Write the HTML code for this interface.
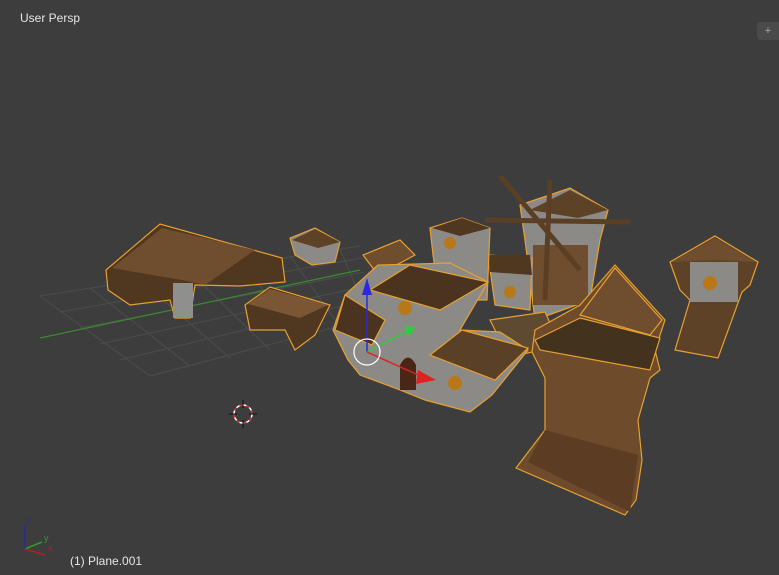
<!DOCTYPE html>
<html><head><style>
html,body{margin:0;padding:0;background:#3d3d3d;width:779px;height:575px;overflow:hidden;font-family:"Liberation Sans",sans-serif}
.t{position:absolute;color:#e6e6e6;font-size:12px}
</style></head><body>
<div class="t" style="left:20px;top:11px">User Persp</div>
<div class="t" style="left:70px;top:554px">(1) Plane.001</div>
<div style="position:absolute;left:757px;top:22px;width:22px;height:18px;background:#4a4a4a;border-radius:3px 0 0 3px;color:#aaa;font-size:11px;text-align:center;line-height:18px">+</div>
<svg width="779" height="575" style="position:absolute;left:0;top:0">
<g stroke="#4d4d4d" stroke-width="1" fill="none">
<path d="M40 296 L360 246 M60 312 L362 258 M80 328 L364 272 M100 344 L366 286 M120 360 L368 300 M150 376 L370 318"/>
<path d="M40 296 L150 376 M90 288 L190 366 M140 280 L230 358 M190 272 L270 350 M240 264 L310 342 M290 256 L345 334 M340 249 L370 320"/>
</g>
<path d="M40 338 L360 270" stroke="#3b8a2e" stroke-width="1.2"/>
<g stroke="#e8a030" stroke-width="1.2">
<path d="M106 270 L160 224 L282 258 L285 282 L240 286 L195 285 L190 318 L175 318 L170 300 L130 305 L108 290 Z" fill="#4f3720"/>
<path d="M112 268 L162 228 L255 250 L205 285 L182 280 Z" fill="#6e4e2e" stroke="none"/>
<rect x="173" y="283" width="20" height="35" fill="#8f8f8d" stroke="none"/>
<path d="M290 238 L315 228 L340 242 L335 262 L312 265 L295 255 Z" fill="#8c8a86"/>
<path d="M292 240 L315 229 L340 242 L318 248 Z" fill="#5e4228" stroke="none"/>
<path d="M245 305 L270 287 L330 305 L315 335 L295 350 L285 330 L250 330 Z" fill="#4f3720"/>
<path d="M248 304 L270 289 L328 305 L300 318 Z" fill="#7a5634" stroke="none"/>
</g>
<g stroke="#e8a030" stroke-width="1.2">
<path d="M670 262 L715 236 L758 262 L750 285 L742 292 L718 358 L675 350 L690 300 L680 290 Z" fill="#5e4228"/>
<path d="M672 262 L715 238 L756 262 L716 260 Z" fill="#6e4e2e" stroke="none"/>
<rect x="690" y="262" width="48" height="40" fill="#8c8a86" stroke="none"/>
<circle cx="710" cy="283" r="7" fill="#b87818" stroke="none"/>
</g>
<g stroke="#e8a030" stroke-width="1.2">
<path d="M520 205 L570 188 L608 210 L600 240 L590 300 L535 320 L525 240 Z" fill="#8c8a86"/>
<path d="M530 210 L570 190 L608 210 L578 218 Z" fill="#5e4228" stroke="none"/>
<rect x="533" y="245" width="55" height="60" fill="#6e4e2e" stroke="none"/>
<path d="M500 176 L580 270 M485 220 L630 222 M550 180 L545 300" stroke="#5a3f25" stroke-width="5" fill="none"/>
<path d="M488 255 L532 258 L530 310 L495 305 Z" fill="#8c8a86"/>
<path d="M488 255 L530 255 L532 275 L490 272 Z" fill="#4f3720" stroke="none"/>
<circle cx="510" cy="292" r="6" fill="#b87818" stroke="none"/>
</g>
<g stroke="#e8a030" stroke-width="1.2">
<path d="M430 228 L462 218 L490 228 L487 300 L440 300 L433 255 Z" fill="#8c8a86"/>
<path d="M432 228 L462 218 L490 228 L460 236 Z" fill="#4f3720" stroke="none"/>
<circle cx="450" cy="243" r="6" fill="#b87818" stroke="none"/>
<path d="M363 255 L400 240 L415 255 L378 275 Z" fill="#6e4e2e"/>
</g>
<g stroke="#e8a030" stroke-width="1.2">
<path d="M490 320 L545 312 L560 345 L520 355 L500 340 Z" fill="#5e4a30"/>
</g>
<g stroke="#e8a030" stroke-width="1.2">
<path d="M345 295 L378 265 L450 263 L488 282 L460 330 L500 332 L528 350 L492 395 L470 412 L425 400 L400 390 L360 375 L348 360 L333 330 Z" fill="#8c8a86"/>
<path d="M370 290 L410 265 L488 282 L440 310 Z" fill="#4a3420"/>
<path d="M335 330 L345 295 L385 320 L372 345 Z" fill="#4a3420"/>
<path d="M430 355 L462 330 L528 348 L495 380 Z" fill="#5a4026"/>
<circle cx="405" cy="308" r="7" fill="#b87818" stroke="none"/>
<circle cx="455" cy="383" r="7" fill="#b87818" stroke="none"/>
<path d="M400 365 Q408 350 416 365 L416 390 L400 390 Z" fill="#4a2616" stroke="none"/>
</g>
<g stroke="#e8a030" stroke-width="1.2">
<path d="M535 330 L580 305 L615 265 L665 320 L655 350 L660 370 L650 378 L638 420 L642 460 L636 500 L625 515 L516 468 L545 430 L545 378 L532 352 Z" fill="#6e4b2b"/>
<path d="M535 340 L580 318 L660 338 L650 370 L540 350 Z" fill="#43321e"/>
<path d="M580 315 L615 268 L662 320 L650 335 Z" fill="#6e4e2e"/>
<path d="M528 462 L545 430 L638 455 L630 512 Z" fill="#5c3c22" stroke="none"/>
</g>
<path d="M367 352 L367 285" stroke="#2a2adc" stroke-width="1.5"/>
<path d="M362 295 L367 278 L372 295 Z" fill="#2a2adc"/>
<path d="M367 352 L410 330" stroke="#2ecc40" stroke-width="1.5"/>
<path d="M404 326 L416 327 L408 337 Z" fill="#2ecc40"/>
<path d="M367 352 L425 378" stroke="#dd2222" stroke-width="1.5"/>
<path d="M418 370 L436 380 L416 384 Z" fill="#dd2222"/>
<circle cx="367" cy="352" r="13" fill="none" stroke="#fff" stroke-width="1.2"/>
<circle cx="243" cy="414" r="9" fill="none" stroke="#fff" stroke-width="1.5" stroke-dasharray="4 3"/>
<circle cx="243" cy="414" r="9" fill="none" stroke="#d33" stroke-width="1.5" stroke-dasharray="3 4" stroke-dashoffset="3.5"/>
<path d="M243 400 V408 M243 420 V428 M229 414 H237 M249 414 H257" stroke="#111" stroke-width="1"/>
<path d="M25 549 V525" stroke="#2a2aa0" stroke-width="1.5"/>
<path d="M25 549 L42 542" stroke="#2e9a2e" stroke-width="1.5"/>
<path d="M25 549 L45 555" stroke="#b02020" stroke-width="1.5"/>
<text x="26" y="524" fill="#2a2aa0" font-size="9" font-family="Liberation Sans">z</text>
<text x="44" y="541" fill="#2e9a2e" font-size="9" font-family="Liberation Sans">y</text>
<text x="48" y="551" fill="#b02020" font-size="9" font-family="Liberation Sans">x</text>
</svg>
</body></html>
